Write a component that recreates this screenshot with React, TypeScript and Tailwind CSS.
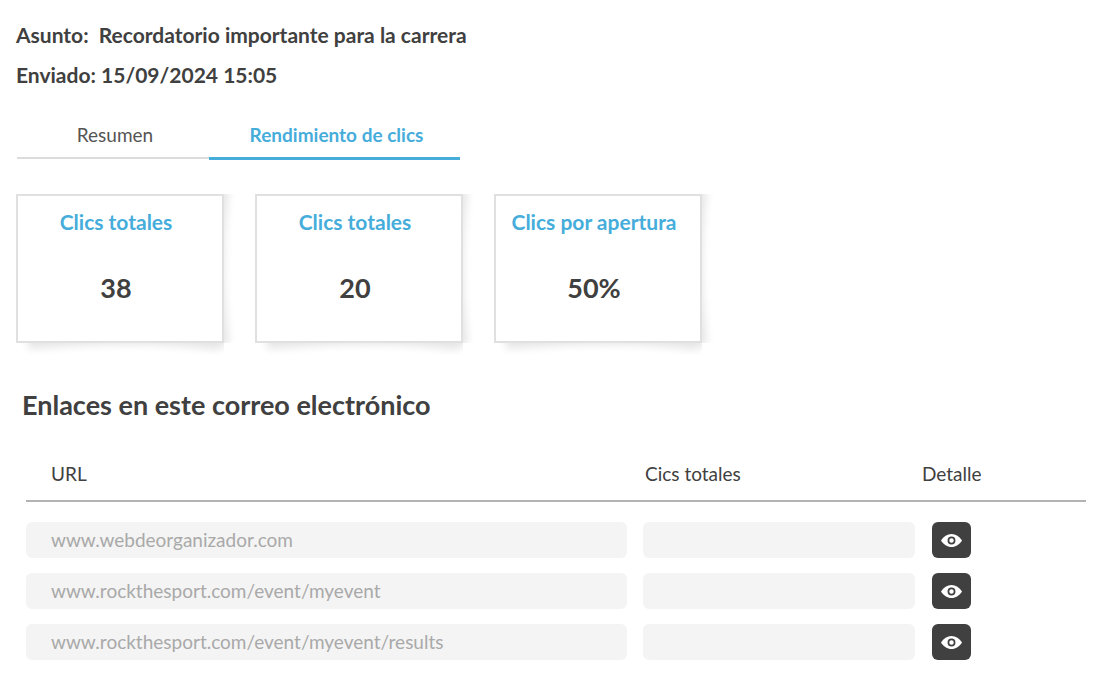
import { useState } from "react";

const TABS = [
  { id: "resumen", label: "Resumen", width: "w-48" },
  { id: "clics", label: "Rendimiento de clics", width: "w-[251px]" },
];

const STATS = [
  { title: "Clics totales", value: "38" },
  { title: "Clics totales", value: "20" },
  { title: "Clics por apertura", value: "50%" },
];

const LINKS = [
  "www.webdeorganizador.com",
  "www.rockthesport.com/event/myevent",
  "www.rockthesport.com/event/myevent/results",
];

function EyeIcon() {
  return (
    <svg width="21" height="13" viewBox="0 0 21 13" aria-hidden="true">
      <path d="M0 6.5C2.6 2.4 6.2 0 10.5 0S18.4 2.4 21 6.5C18.4 10.6 14.8 13 10.5 13S2.6 10.6 0 6.5Z" fill="#fff" />
      <circle cx="10.5" cy="6.5" r="3.1" fill="#fff" stroke="#404040" strokeWidth="1.7" />
    </svg>
  );
}

// Lifted-corner shadow, thinner in the middle of each edge
function CardShadow() {
  return (
    <svg className="absolute left-0 top-0 -z-10 overflow-visible" width="208" height="149" viewBox="0 0 208 149" aria-hidden="true">
      <defs>
        <filter id="soft" x="-20%" y="-20%" width="140%" height="140%">
          <feGaussianBlur stdDeviation="4" />
        </filter>
        <clipPath id="edge">
          <path d="M0 0H222V149H208V161H0Z" />
        </clipPath>
      </defs>
      <g clipPath="url(#edge)">
        <path d="M12 -4H213Q203 70 213 148L202 156Q125 145 12 155Z" fill="#000" opacity="0.1" filter="url(#soft)" />
      </g>
    </svg>
  );
}

function StatCard({ title, value }: { title: string; value: string }) {
  return (
    <div className="relative isolate w-52">
      <CardShadow />
      <div className="flex h-[149px] flex-col items-center border-2 border-[#e0e0e0] bg-white pt-3 pr-2">
        <h2 className="text-[21px] leading-7 font-bold text-[#46addb]">{title}</h2>
        <p className="mt-8 text-[27px] leading-10 font-bold">{value}</p>
      </div>
    </div>
  );
}

export default function App() {
  const [tab, setTab] = useState("clics");

  return (
    <main className="min-h-screen bg-white px-2 pt-[19px] pb-6 font-['Lato','Carlito',sans-serif] text-[#404040]">
      <div className="px-2">
        {/* Mail header */}
        <div className="flex flex-col gap-2 text-[21px] leading-8 font-bold">
          <p>Asunto:&nbsp; Recordatorio importante para la carrera</p>
          <p>Enviado: 15/09/2024 15:05</p>
        </div>

        {/* Tabs */}
        <div role="tablist" className="mt-6 ml-px flex items-start">
          {TABS.map((t) => (
            <button
              key={t.id}
              type="button"
              role="tab"
              aria-selected={tab === t.id}
              onClick={() => setTab(t.id)}
              className={`${t.width} pt-[6px] pb-2 pl-1 text-[19px] leading-7 ${
                tab === t.id
                  ? "border-b-3 border-[#46addb] font-bold text-[#46addb]"
                  : "border-b-2 border-[#dcdcdc] text-[#555]"
              }`}
            >
              {t.label}
            </button>
          ))}
        </div>

        {/* Stats */}
        <div className="mt-[34px] flex flex-wrap gap-[31px]">
          {STATS.map((s, i) => (
            <StatCard key={i} title={s.title} value={s.value} />
          ))}
        </div>
      </div>

      {/* Links */}
      <section className="mt-[42px] pl-[14px]">
        <h2 className="text-[27px] leading-10 font-bold">Enlaces en este correo electrónico</h2>
        <table className="mt-6 ml-1 w-[calc(100%-4px)] table-fixed border-separate border-spacing-0 text-[19px]">
          <thead>
            <tr className="h-[53px] text-left">
              <th className="border-b-2 border-[#b3b3b3] pl-[25px] font-normal">URL</th>
              <th className="w-[279px] border-b-2 border-[#b3b3b3] pl-[2px] font-normal">Cics totales</th>
              <th className="w-[164px] border-b-2 border-[#b3b3b3] font-normal">Detalle</th>
            </tr>
          </thead>
          <tbody className="before:block before:h-[5px]">
            {LINKS.map((url) => (
              <tr key={url}>
                <td className="pt-[15px] pr-4">
                  <div className="flex h-9 items-center rounded-md bg-[#f4f4f4] pl-[25px] text-[#a9a9a9]">{url}</div>
                </td>
                <td className="pt-[15px] pr-[7px]">
                  <div className="h-9 rounded-md bg-[#f4f4f4]" />
                </td>
                <td className="pt-[15px] pl-[10px]">
                  <button
                    type="button"
                    aria-label={`Ver detalle de ${url}`}
                    className="flex h-9 w-[39px] items-center justify-center rounded-md bg-[#404040]"
                  >
                    <EyeIcon />
                  </button>
                </td>
              </tr>
            ))}
          </tbody>
        </table>
      </section>
    </main>
  );
}
